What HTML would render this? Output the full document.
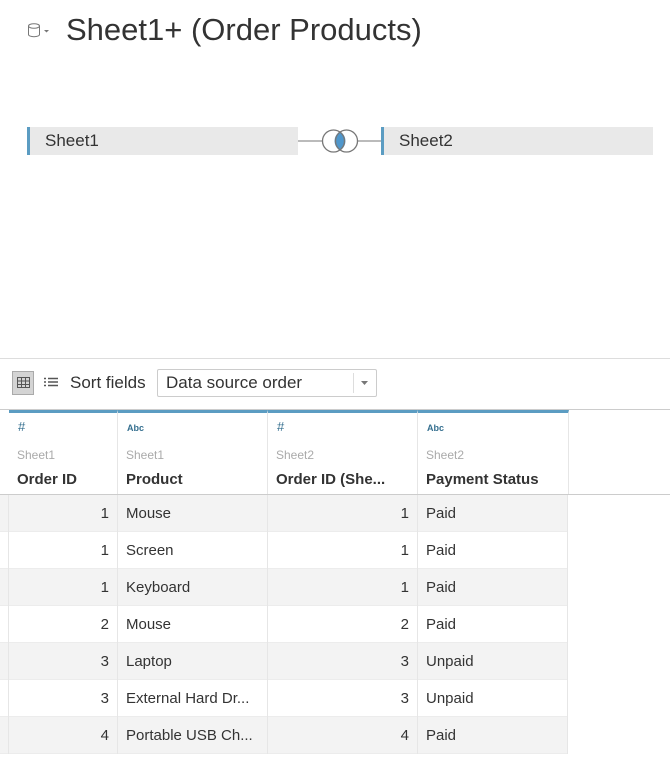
<!DOCTYPE html>
<html><head><style>
*{margin:0;padding:0;box-sizing:border-box}
body{width:670px;height:769px;background:#fff;font-family:"Liberation Sans",sans-serif;color:#333;position:relative;overflow:hidden}
.a{position:absolute}
.title{left:66px;top:12px;font-size:31px;color:#333;white-space:nowrap}
.bar{height:28px;top:127px;background:#e9e9e9;border-left:3px solid #5b9cc2;font-size:17px;line-height:28px;padding-left:15px;color:#333}
.hdr{top:410px;height:84px;border-top:3px solid #5b9cc2;border-right:1px solid #e6e6e6;background:#fff}
.ic{font-size:9px;color:#356f8f;position:absolute;left:9px;top:10px;font-weight:bold}
.src{font-size:12px;color:#aaa;position:absolute;left:8px;top:35px}
.nm{font-size:15px;font-weight:bold;color:#333;position:absolute;left:8px;top:58px;white-space:nowrap}
.row{left:0;width:568px;height:37px;border-bottom:1px solid #ececec}
.c{position:absolute;top:0;height:37px;line-height:37px;font-size:15px;border-right:1px solid #e6e6e6;padding:0 8px;white-space:nowrap}
.s{padding:0}
</style></head><body>
<svg class="a" style="left:26px;top:22px" width="28" height="18"><ellipse cx="8" cy="4" rx="5.5" ry="2.3" fill="none" stroke="#777"/><path d="M2.5 4v8.5c0 1.3 2.4 2.2 5.5 2.2s5.5-.9 5.5-2.2V4" fill="none" stroke="#777"/><path d="M18 8l2.5 2.5L23 8z" fill="#777"/></svg>
<div class="a title">Sheet1+ (Order Products)</div>
<div class="a bar" style="left:27px;width:271px">Sheet1</div>
<div class="a" style="left:298px;top:140px;width:24px;height:2px;background:#bbb"></div>
<div class="a" style="left:358px;top:140px;width:23px;height:2px;background:#bbb"></div>
<svg class="a" style="left:320px;top:128px" width="40" height="26"><path d="M20 3.5a11 11 0 0 1 0 19a11 11 0 0 1 0-19z" fill="#4f97cc"/><circle cx="13.5" cy="13" r="11" fill="none" stroke="#777" stroke-width="1.3"/><circle cx="26.5" cy="13" r="11" fill="none" stroke="#777" stroke-width="1.3"/></svg>
<div class="a bar" style="left:381px;width:272px">Sheet2</div>
<div class="a" style="left:0;top:358px;width:670px;height:1px;background:#ddd"></div>
<div class="a" style="left:12px;top:371px;width:22px;height:24px;background:#d4d4d4;border:1px solid #aaa"></div>
<svg class="a" style="left:17px;top:377px" width="13" height="12"><rect x=".5" y=".5" width="12" height="10" fill="none" stroke="#555"/><path d="M.5 4h12M.5 7.5h12M4.5 .5v10M8.5.5v10" stroke="#555"/></svg>
<svg class="a" style="left:44px;top:377px" width="14" height="12"><path d="M0 1.5h2M4 1.5h10M0 5h2M4 5h10M0 8.5h2M4 8.5h10" stroke="#555" stroke-width="1.5"/></svg>
<div class="a" style="left:70px;top:373px;font-size:17px;color:#333">Sort fields</div>
<div class="a" style="left:157px;top:369px;width:220px;height:28px;border:1px solid #ccc;border-radius:2px;font-size:17px;line-height:26px;padding-left:8px;color:#333">Data source order
<div class="a" style="left:195px;top:3px;width:1px;height:20px;background:#ddd"></div>
<svg class="a" style="left:203px;top:11px" width="8" height="5"><path d="M0 0h7L3.5 4z" fill="#777"/></svg></div>
<div class="a" style="left:0;top:409px;width:670px;height:1px;background:#ccc"></div>
<div class="a" style="left:0;top:494px;width:670px;height:1px;background:#ccc"></div>
<div class="a hdr" style="left:9px;width:109px"><span class="ic" style="font-size:13px;top:6px;font-weight:normal">#</span><span class="src">Sheet1</span><span class="nm">Order ID</span></div>
<div class="a hdr" style="left:118px;width:150px"><span class="ic">Abc</span><span class="src">Sheet1</span><span class="nm">Product</span></div>
<div class="a hdr" style="left:268px;width:150px"><span class="ic" style="font-size:13px;top:6px;font-weight:normal">#</span><span class="src">Sheet2</span><span class="nm">Order ID (She...</span></div>
<div class="a hdr" style="left:418px;width:151px"><span class="ic">Abc</span><span class="src">Sheet2</span><span class="nm">Payment Status</span></div>

<div class="a row" style="top:495px;background:#f3f3f3"><div class="c s" style="left:0;width:9px"></div><div class="c" style="left:9px;width:109px;text-align:right">1</div><div class="c" style="left:118px;width:150px">Mouse</div><div class="c" style="left:268px;width:150px;text-align:right">1</div><div class="c" style="left:418px;width:150px">Paid</div></div>
<div class="a row" style="top:532px;background:#fff"><div class="c s" style="left:0;width:9px"></div><div class="c" style="left:9px;width:109px;text-align:right">1</div><div class="c" style="left:118px;width:150px">Screen</div><div class="c" style="left:268px;width:150px;text-align:right">1</div><div class="c" style="left:418px;width:150px">Paid</div></div>
<div class="a row" style="top:569px;background:#f3f3f3"><div class="c s" style="left:0;width:9px"></div><div class="c" style="left:9px;width:109px;text-align:right">1</div><div class="c" style="left:118px;width:150px">Keyboard</div><div class="c" style="left:268px;width:150px;text-align:right">1</div><div class="c" style="left:418px;width:150px">Paid</div></div>
<div class="a row" style="top:606px;background:#fff"><div class="c s" style="left:0;width:9px"></div><div class="c" style="left:9px;width:109px;text-align:right">2</div><div class="c" style="left:118px;width:150px">Mouse</div><div class="c" style="left:268px;width:150px;text-align:right">2</div><div class="c" style="left:418px;width:150px">Paid</div></div>
<div class="a row" style="top:643px;background:#f3f3f3"><div class="c s" style="left:0;width:9px"></div><div class="c" style="left:9px;width:109px;text-align:right">3</div><div class="c" style="left:118px;width:150px">Laptop</div><div class="c" style="left:268px;width:150px;text-align:right">3</div><div class="c" style="left:418px;width:150px">Unpaid</div></div>
<div class="a row" style="top:680px;background:#fff"><div class="c s" style="left:0;width:9px"></div><div class="c" style="left:9px;width:109px;text-align:right">3</div><div class="c" style="left:118px;width:150px">External Hard Dr...</div><div class="c" style="left:268px;width:150px;text-align:right">3</div><div class="c" style="left:418px;width:150px">Unpaid</div></div>
<div class="a row" style="top:717px;background:#f3f3f3"><div class="c s" style="left:0;width:9px"></div><div class="c" style="left:9px;width:109px;text-align:right">4</div><div class="c" style="left:118px;width:150px">Portable USB Ch...</div><div class="c" style="left:268px;width:150px;text-align:right">4</div><div class="c" style="left:418px;width:150px">Paid</div></div>
</body></html>
